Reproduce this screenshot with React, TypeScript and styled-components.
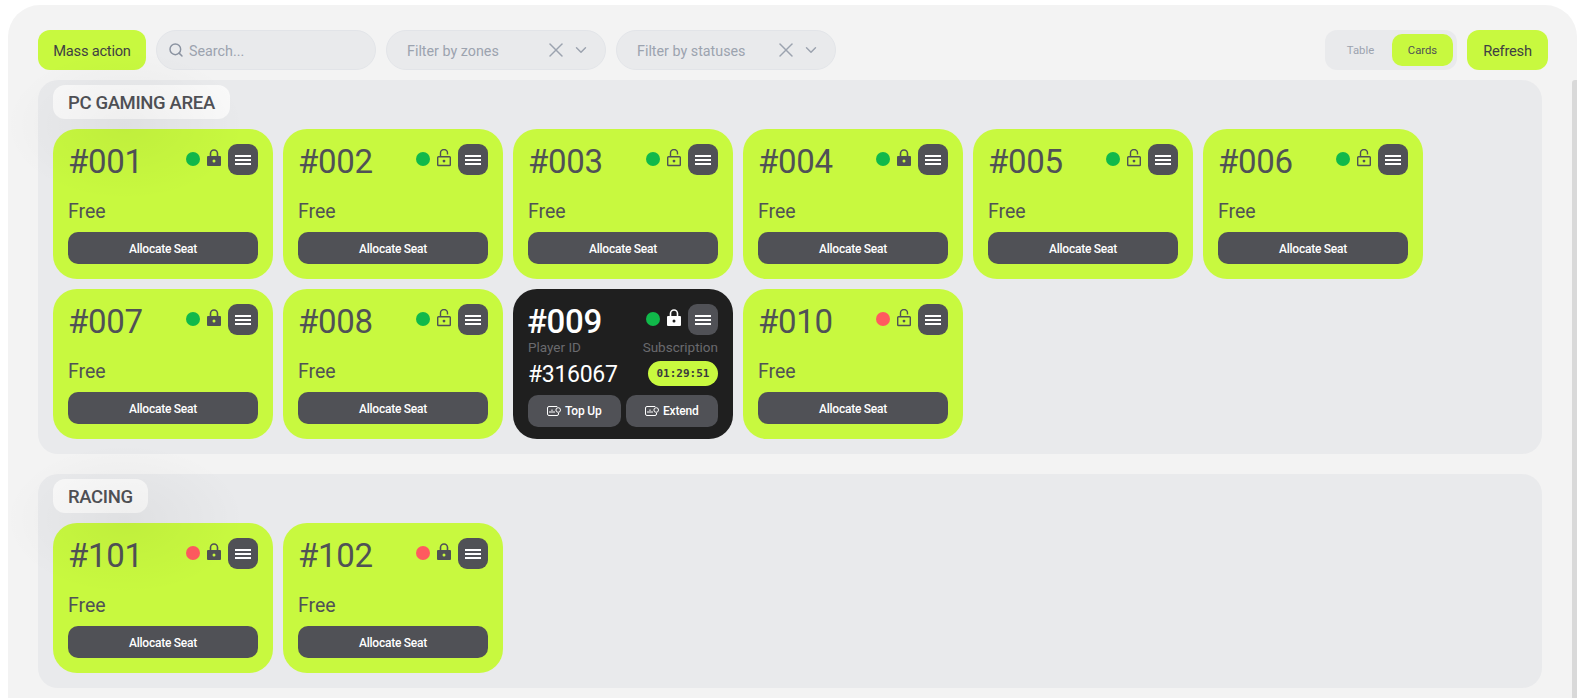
import React from "react";
import styled, { createGlobalStyle } from "styled-components";
import { ChevronDown, Search, X } from "lucide-react";

const Global = createGlobalStyle`
  html, body { margin: 0; padding: 0; background: #fff; height: 100%; overflow: hidden; }
  body { font-family: "Roboto", "Open Sans", sans-serif; color: #505156; }
  * { box-sizing: border-box; }
`;

const Panel = styled.div`
  position: relative;
  margin: 5px 0 0 8px;
  height: 693px;
  overflow: hidden;
  padding-top: 25px;
  background: #f3f3f3;
  border-radius: 32px 32px 0 0;
  display: flex;
  flex-direction: column;
`;

const ScrollThumb = styled.div`
  position: absolute;
  right: 0;
  top: 75px;
  bottom: 0;
  width: 5px;
  background: #d9d9d9;
  border-radius: 3px 0 0 0;
`;

const Toolbar = styled.div`
  display: flex;
  align-items: center;
  gap: 10px;
  height: 40px;
  margin: 0 29px 10px 30px;
`;

const LimeButton = styled.button<{ $w: number }>`
  height: 40px;
  border: 0;
  border-radius: 12px;
  background: #c8f93f;
  color: #3f4043;
  font: 400 14.7px "Roboto", sans-serif;
  letter-spacing: -0.25px;
  padding: 2px 0 0;
  width: ${(p) => p.$w}px;
`;

const SearchBox = styled.div`
  width: 220px;
  height: 40px;
  border-radius: 20px;
  border: 1px solid #e2e4e8;
  background: #e9eaec;
  display: flex;
  align-items: center;
  gap: 5px;
  padding-left: 11px;
  color: #9ca3af;
  font-size: 14.3px;
`;

const SearchLabel = styled.span`
  padding-top: 2px;
`;

const FilterBox = styled(SearchBox)`
  padding: 0 15px 0 20px;
  gap: 0;
`;

const FilterText = styled.span`
  flex: 1;
  padding-top: 2px;
`;

const FilterChevron = styled(ChevronDown)`
  margin-left: 4px;
`;

const Spacer = styled.div`
  flex: 1;
`;

const Toggle = styled.div`
  width: 132px;
  height: 40px;
  border-radius: 12px;
  background: #e9eaec;
  padding: 4px;
  display: flex;
  align-items: center;
`;

const ToggleItem = styled.div<{ $active?: boolean }>`
  width: ${(p) => (p.$active ? 61 : 63)}px;
  height: 32px;
  padding-top: 1px;
  border-radius: 10px;
  display: flex;
  align-items: center;
  justify-content: center;
  font-size: 11.3px;
  color: ${(p) => (p.$active ? "#505156" : "#9ca3af")};
  background: ${(p) => (p.$active ? "#c8f93f" : "transparent")};
`;

const ZoneList = styled.div`
  display: flex;
  flex-direction: column;
  gap: 20px;
  margin: 0 35px 0 30px;
`;

const Zone = styled.section`
  position: relative;
  background: #e9eaec;
  border-radius: 20px;
  padding: 5px 15px 15px;
`;

const Haze = styled.div`
  position: absolute;
  left: -33px;
  top: -30px;
  width: 240px;
  height: 150px;
  pointer-events: none;
  background: radial-gradient(closest-side, rgba(0, 0, 0, 0.045), rgba(0, 0, 0, 0));
`;

const ZoneLabel = styled.div`
  display: inline-flex;
  align-items: center;
  height: 34px;
  padding: 1px 15px 0;
  border-radius: 12px;
  background: #f9f9f9;
  font-size: 18.5px;
  font-weight: 500;
  color: #505156;
  letter-spacing: -0.35px;
`;

const Grid = styled.div`
  display: flex;
  flex-wrap: wrap;
  gap: 10px;
  margin-top: 10px;
`;

const Card = styled.article<{ $dark?: boolean }>`
  width: 220px;
  height: 150px;
  border-radius: 24px;
  padding: ${(p) => (p.$dark ? "15px 15px 12px" : "15px")};
  display: flex;
  flex-direction: column;
  background: ${(p) => (p.$dark ? "#1f1f1f" : "#c8f93f")};
  color: ${(p) => (p.$dark ? "#fff" : "#505156")};
`;

const CardHead = styled.div`
  display: flex;
  align-items: flex-start;
  height: 31px;
`;

const SeatNumber = styled.div<{ $dark?: boolean }>`
  font-size: 33px;
  line-height: 33px;
  padding-top: 1px;
  font-weight: ${(p) => (p.$dark ? 500 : 400)};
  letter-spacing: -0.3px;
  flex: 1;
  margin-left: ${(p) => (p.$dark ? -1 : 0)}px;
`;

const Dot = styled.span<{ $busy?: boolean }>`
  width: 14px;
  height: 14px;
  margin-top: 8px;
  border-radius: 50%;
  background: ${(p) => (p.$busy ? "#ff5a5f" : "#10b94a")};
`;

const LockWrap = styled.svg`
  width: 14px;
  height: 18px;
  margin: 5px 7px 0 7px;
  color: inherit;
`;

const MenuButton = styled.button`
  width: 30px;
  height: 31px;
  border: 0;
  border-radius: 9px;
  background: #505156;
  padding: 0;
  display: flex;
  flex-direction: column;
  align-items: center;
  justify-content: center;
  gap: 2px;
`;

const MenuLine = styled.span`
  width: 16px;
  height: 2px;
  background: #fff;
`;

const Status = styled.div`
  font-size: 19.5px;
  line-height: 24px;
  margin-top: auto;
  margin-bottom: 8px;
`;

const Allocate = styled.button`
  height: 32px;
  flex: none;
  border: 0;
  border-radius: 10px;
  background: #505156;
  color: #fff;
  font: 500 12px "Roboto", sans-serif;
  letter-spacing: -0.25px;
  padding: 1px 0 0;
`;

const InfoRow = styled.div`
  display: flex;
  justify-content: space-between;
  align-items: center;
`;

const InfoLabel = styled.span`
  font-size: 13.5px;
  line-height: 16px;
  color: #6a6a6e;
`;

const PlayerId = styled.span`
  font-size: 23px;
  line-height: 25px;
  font-weight: 400;
  color: #fff;
  letter-spacing: -0.3px;
  padding-top: 2px;
`;

const Timer = styled.span`
  width: 70px;
  height: 25px;
  border-radius: 13px;
  background: #c8f93f;
  color: #3a3b3e;
  display: flex;
  align-items: center;
  justify-content: center;
  font: 700 11px "DejaVu Sans Mono", monospace;
`;

const ActionRow = styled.div`
  display: flex;
  gap: 5px;
  margin-top: auto;
`;

const ActionButton = styled.button`
  flex: 1;
  height: 32px;
  border: 0;
  border-radius: 10px;
  background: #505156;
  color: #fff;
  font: 500 12px "Roboto", sans-serif;
  letter-spacing: -0.2px;
  display: flex;
  align-items: center;
  justify-content: center;
  gap: 4px;
  padding: 0;
`;

const DarkHead = styled(CardHead)`
  height: 33px;
`;

const InfoBlock = styled.div`
  margin-top: 2px;
  display: flex;
  flex-direction: column;
  gap: 5px;
`;

function Lock({ closed }: { closed: boolean }) {
  return (
    <LockWrap viewBox="0 0 14 18" aria-hidden="true">
      {closed ? (
        <>
          <path d="M3.500 8V4.500a3.500 3.500 0 0 1 7 0V8" fill="none" stroke="currentColor" strokeWidth="1.600" />
          <path fillRule="evenodd" fill="currentColor" d="M1 7h12a1 1 0 0 1 1 1v8a1 1 0 0 1-1 1H1a1 1 0 0 1-1-1V8a1 1 0 0 1 1-1ZM7 10.500a1.500 1.500 0 1 0 0 3 1.500 1.500 0 0 0 0-3Z" />
        </>
      ) : (
        <>
          <path d="M3.500 8V4a3.500 3.500 0 0 1 7 0V5.500" fill="none" stroke="currentColor" strokeWidth="1.400" />
          <rect x="0.700" y="7.700" width="12.600" height="8.800" rx="0.800" fill="none" stroke="currentColor" strokeWidth="1.400" />
          <circle cx="7" cy="12.100" r="1.400" fill="currentColor" />
        </>
      )}
    </LockWrap>
  );
}

function TicketIcon() {
  return (
    <svg width="14" height="12" viewBox="0 0 14 12" fill="none" stroke="currentColor" strokeWidth="1" aria-hidden="true">
      <path d="M10 2V1.500H2A1.500 1.500 0 0 0 .5 3v6A1.500 1.500 0 0 0 2 10.500h8a1.500 1.500 0 0 0 1.500-1.500V8" />
      <circle cx="11.200" cy="5" r="2.300" />
      <path d="M3 8V6M5 8V4.500M7 8V6" />
    </svg>
  );
}

function Menu() {
  return (
    <MenuButton aria-label="menu">
      <MenuLine />
      <MenuLine />
      <MenuLine />
    </MenuButton>
  );
}

type Seat = { id: string; closed: boolean; busy?: boolean; player?: boolean };

function SeatCard({ seat }: { seat: Seat }) {
  if (seat.player) {
    return (
      <Card $dark>
        <DarkHead>
          <SeatNumber $dark>#{seat.id}</SeatNumber>
          <Dot />
          <Lock closed={seat.closed} />
          <Menu />
        </DarkHead>
        <InfoBlock>
          <InfoRow>
            <InfoLabel>Player ID</InfoLabel>
            <InfoLabel>Subscription</InfoLabel>
          </InfoRow>
          <InfoRow>
            <PlayerId>#316067</PlayerId>
            <Timer>01:29:51</Timer>
          </InfoRow>
        </InfoBlock>
        <ActionRow>
          <ActionButton>
            <TicketIcon />
            Top Up
          </ActionButton>
          <ActionButton>
            <TicketIcon />
            Extend
          </ActionButton>
        </ActionRow>
      </Card>
    );
  }
  return (
    <Card>
      <CardHead>
        <SeatNumber>#{seat.id}</SeatNumber>
        <Dot $busy={seat.busy} />
        <Lock closed={seat.closed} />
        <Menu />
      </CardHead>
      <Status>Free</Status>
      <Allocate>Allocate Seat</Allocate>
    </Card>
  );
}

const pcSeats: Seat[] = [
  { id: "001", closed: true },
  { id: "002", closed: false },
  { id: "003", closed: false },
  { id: "004", closed: true },
  { id: "005", closed: false },
  { id: "006", closed: false },
  { id: "007", closed: true },
  { id: "008", closed: false },
  { id: "009", closed: true, player: true },
  { id: "010", closed: false, busy: true },
];

const racingSeats: Seat[] = [
  { id: "101", closed: true, busy: true },
  { id: "102", closed: true, busy: true },
];

export default function App() {
  return (
    <>
      <Global />
      <Panel>
        <Toolbar>
          <LimeButton $w={108}>Mass action</LimeButton>
          <SearchBox>
            <Search size={16} strokeWidth={2.2} color="#8b93a1" />
            <SearchLabel>Search...</SearchLabel>
          </SearchBox>
          <FilterBox>
            <FilterText>Filter by zones</FilterText>
            <X size={24} strokeWidth={1.5} />
            <FilterChevron size={18} strokeWidth={1.9} />
          </FilterBox>
          <FilterBox>
            <FilterText>Filter by statuses</FilterText>
            <X size={24} strokeWidth={1.5} />
            <FilterChevron size={18} strokeWidth={1.9} />
          </FilterBox>
          <Spacer />
          <Toggle>
            <ToggleItem>Table</ToggleItem>
            <ToggleItem $active>Cards</ToggleItem>
          </Toggle>
          <LimeButton $w={81}>Refresh</LimeButton>
        </Toolbar>
        <ZoneList>
          <Zone>
            <ZoneLabel>PC GAMING AREA</ZoneLabel>
            <Grid>
              {pcSeats.map((s) => (
                <SeatCard key={s.id} seat={s} />
              ))}
            </Grid>
            <Haze />
          </Zone>
          <Zone>
            <ZoneLabel>RACING</ZoneLabel>
            <Grid>
              {racingSeats.map((s) => (
                <SeatCard key={s.id} seat={s} />
              ))}
            </Grid>
            <Haze />
          </Zone>
        </ZoneList>
        <ScrollThumb />
      </Panel>
    </>
  );
}
